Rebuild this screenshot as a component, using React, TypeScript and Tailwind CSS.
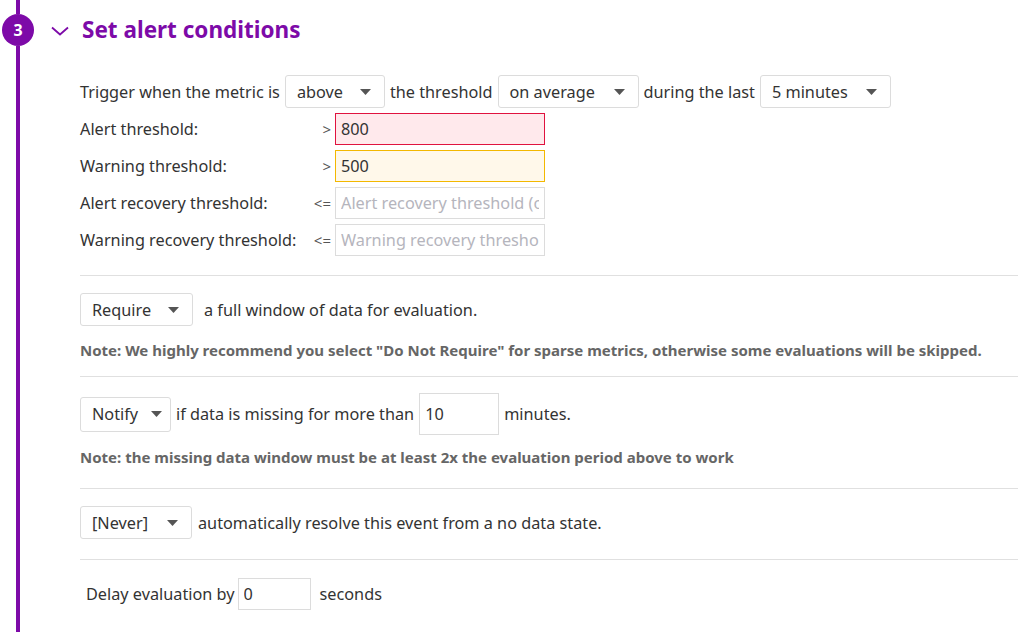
const font = { fontFamily: '"Noto Sans", "Open Sans", sans-serif' }

function Caret() {
  return (
    <svg width="11" height="6" viewBox="0 0 11 6" className="shrink-0">
      <path d="M0 0h11L5.5 6z" fill="#555" />
    </svg>
  )
}

function Select({ value, w }: { value: string; w: string }) {
  return (
    <div
      className={`${w} h-[33px] shrink-0 flex items-center justify-between pl-[11px] pr-[13px] bg-white border border-[#dcdcdc] rounded-[3px] text-[#333]`}
    >
      <span>{value}</span>
      <Caret />
    </div>
  )
}

const thresholds = [
  { label: 'Alert threshold:', op: '>', value: '800', cls: 'border-[#e0123f] bg-[#ffe9ec]' },
  { label: 'Warning threshold:', op: '>', value: '500', cls: 'border-[#f3b800] bg-[#fff8ea]' },
  { label: 'Alert recovery threshold:', op: '<=', placeholder: 'Alert recovery threshold (optional)', cls: 'border-[#dcdcdc] bg-white' },
  { label: 'Warning recovery threshold:', op: '<=', placeholder: 'Warning recovery threshold (optional)', cls: 'border-[#dcdcdc] bg-white' },
]

export default function App() {
  return (
    <div className="w-[1018px] h-[632px] overflow-hidden bg-white flex text-[16.25px] leading-[24px] text-[#333]" style={font}>
      {/* step rail */}
      <div className="w-[36px] shrink-0 flex flex-col items-center">
        <div className="w-[4px] h-[14px] bg-[#7d0aa8]" />
        <div className="w-[32px] h-[32px] rounded-full bg-[#7d0aa8] text-white font-bold text-[16px] flex items-center justify-center">
          3
        </div>
        <div className="w-[4px] flex-1 bg-[#7d0aa8]" />
      </div>

      <div className="flex-1 min-w-0">
        {/* header */}
        <div className="h-[62px] flex items-center gap-[13px] pl-[15px]">
          <svg width="18" height="10" viewBox="0 0 18 10" fill="none">
            <path d="M1 1.5l8 7 8-7" stroke="#7d0aa8" strokeWidth="1.8" />
          </svg>
          <h2 className="text-[22.5px] font-bold text-[#7d0aa8] leading-none pb-[1px]">Set alert conditions</h2>
        </div>

        <div className="pl-[44px] pt-[13px]">
          {/* trigger row */}
          <div className="flex items-center gap-[5px] whitespace-nowrap">
            <span>Trigger when the metric is</span>
            <Select value="above" w="w-[100px]" />
            <span>the threshold</span>
            <Select value="on average" w="w-[141px]" />
            <span>during the last</span>
            <Select value="5 minutes" w="w-[131px]" />
          </div>

          {/* thresholds */}
          <div className="mt-[5px] flex flex-col gap-[5px]">
            {thresholds.map((t) => (
              <div key={t.label} className="flex items-center h-[32px]">
                <span className="w-[228px] whitespace-nowrap">{t.label}</span>
                <span className="w-[23px] text-right text-[15px] text-[#555]">{t.op}</span>
                <input
                  readOnly
                  defaultValue={t.value}
                  placeholder={t.placeholder}
                  className={`ml-[4px] w-[210px] h-[32px] border ${t.cls} px-[5px] text-[#333] placeholder:text-[#b5b5bd] outline-none`}
                />
              </div>
            ))}
          </div>

          <div className="mt-[19px] border-t border-[#e0e0e0]" />

          {/* require full window */}
          <div className="pt-[17px] flex items-center gap-[11px]">
            <Select value="Require" w="w-[113px]" />
            <span>a full window of data for evaluation.</span>
          </div>
          <p className="mt-[13px] text-[15px] leading-[22px] font-bold text-[#666] whitespace-nowrap">
            Note: We highly recommend you select "Do Not Require" for sparse metrics, otherwise some evaluations will be skipped.
          </p>

          <div className="mt-[15px] border-t border-[#e0e0e0]" />

          {/* missing data */}
          <div className="pt-[16px] flex items-center gap-[5px] whitespace-nowrap">
            <div className="w-[91px] h-[35px] shrink-0 flex items-center justify-between pl-[11px] pr-[8px] bg-white border border-[#dcdcdc] rounded-[3px]">
              <span>Notify</span>
              <Caret />
            </div>
            <span>if data is missing for more than</span>
            <input
              readOnly
              defaultValue="10"
              className="w-[80px] h-[42px] border border-[#dcdcdc] px-[5px] text-[#333] outline-none"
            />
            <span>minutes.</span>
          </div>
          <p className="mt-[11px] text-[15px] leading-[22px] font-bold text-[#666] whitespace-nowrap">
            Note: the missing data window must be at least 2x the evaluation period above to work
          </p>

          <div className="mt-[20px] border-t border-[#e0e0e0]" />

          {/* auto resolve */}
          <div className="pt-[17px] flex items-center gap-[6px] whitespace-nowrap">
            <Select value="[Never]" w="w-[112px]" />
            <span>automatically resolve this event from a no data state.</span>
          </div>

          <div className="mt-[20px] border-t border-[#e0e0e0]" />

          {/* delay */}
          <div className="pt-[18px] pl-[6px] flex items-center gap-[3px] whitespace-nowrap">
            <span>Delay evaluation by</span>
            <input
              readOnly
              defaultValue="0"
              className="w-[73px] h-[32px] border border-[#dcdcdc] px-[5px] text-[#333] outline-none"
            />
            <span className="ml-[6px]">seconds</span>
          </div>
        </div>
      </div>
    </div>
  )
}
